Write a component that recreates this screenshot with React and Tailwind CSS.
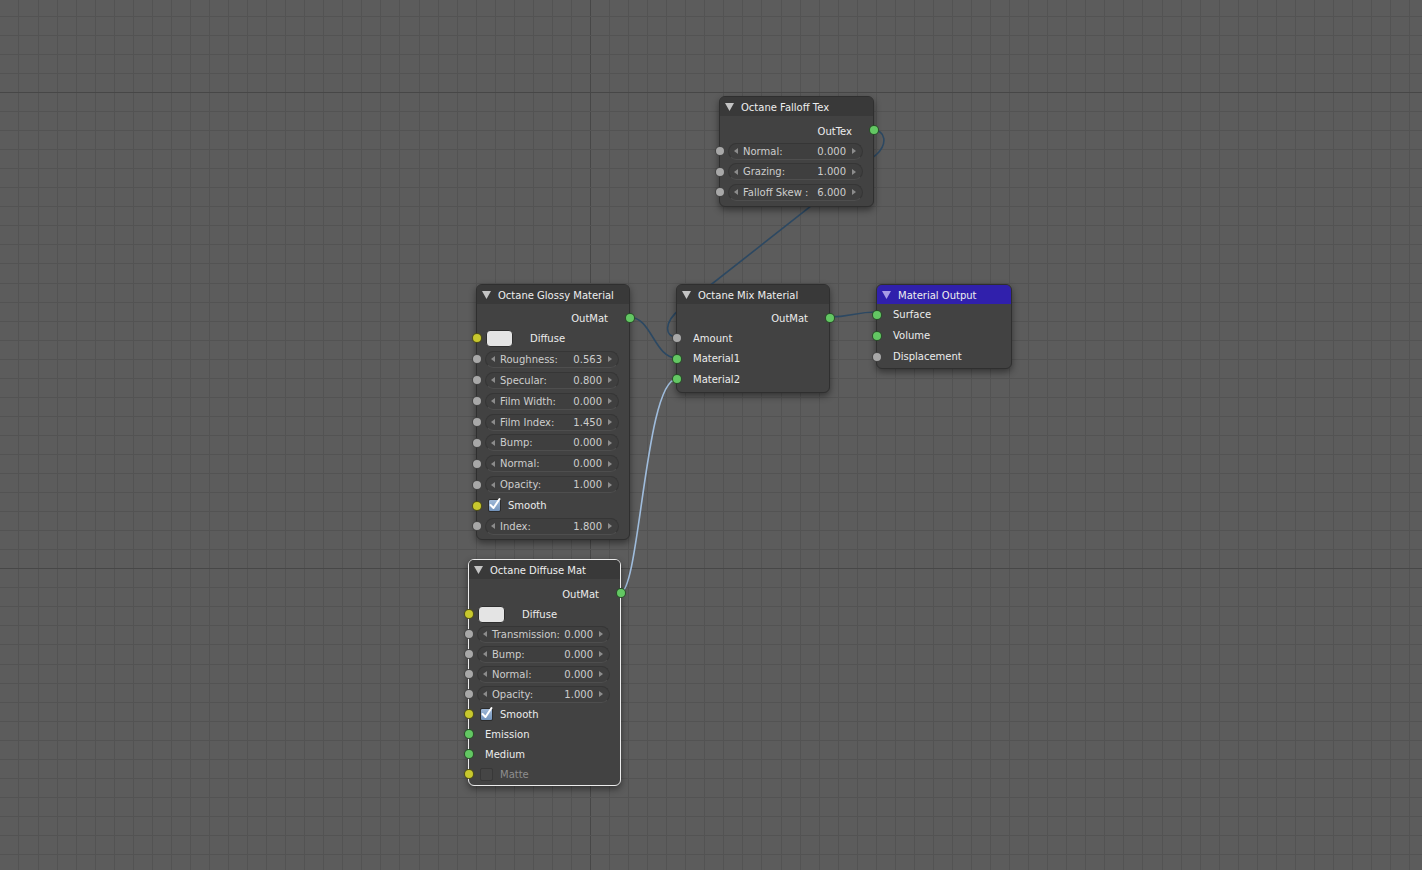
import clsx from "clsx";

const GRID = 19.05;

const SOCKET = {
  gray: "bg-[#a8a8a8]",
  yellow: "bg-[#c8c82e]",
  green: "bg-[#63c763]",
};

const nodes = [
  {
    title: "Octane Falloff Tex",
    x: 719,
    y: 96,
    w: 155,
    out: "OutTex",
    outH: "h-[20px]",
    rowH: "h-[20.5px]",
    pb: "pb-[3px]",
    rows: [
      { type: "field", label: "Normal:", value: "0.000", socket: "gray" },
      { type: "field", label: "Grazing:", value: "1.000", socket: "gray" },
      { type: "field", label: "Falloff Skew :", value: "6.000", socket: "gray" },
    ],
  },
  {
    title: "Octane Glossy Material",
    x: 476,
    y: 284,
    w: 154,
    out: "OutMat",
    outH: "h-[19px]",
    rowH: "h-[20.9px]",
    pb: "pb-[2px]",
    rows: [
      { type: "color", label: "Diffuse", socket: "yellow" },
      { type: "field", label: "Roughness:", value: "0.563", socket: "gray" },
      { type: "field", label: "Specular:", value: "0.800", socket: "gray" },
      { type: "field", label: "Film Width:", value: "0.000", socket: "gray" },
      { type: "field", label: "Film Index:", value: "1.450", socket: "gray" },
      { type: "field", label: "Bump:", value: "0.000", socket: "gray" },
      { type: "field", label: "Normal:", value: "0.000", socket: "gray" },
      { type: "field", label: "Opacity:", value: "1.000", socket: "gray" },
      { type: "check", label: "Smooth", checked: true, socket: "yellow" },
      { type: "field", label: "Index:", value: "1.800", socket: "gray" },
    ],
  },
  {
    title: "Octane Mix Material",
    x: 676,
    y: 284,
    w: 154,
    out: "OutMat",
    outH: "h-[19px]",
    rowH: "h-[20.5px]",
    pb: "pb-[2.5px]",
    rows: [
      { type: "text", label: "Amount", socket: "gray" },
      { type: "text", label: "Material1", socket: "green" },
      { type: "text", label: "Material2", socket: "green" },
    ],
  },
  {
    title: "Material Output",
    x: 876,
    y: 284,
    w: 136,
    output: true,
    rowH: "h-[21px]",
    pb: "pb-[1px]",
    rows: [
      { type: "text", label: "Surface", socket: "green" },
      { type: "text", label: "Volume", socket: "green" },
      { type: "text", label: "Displacement", socket: "gray" },
    ],
  },
  {
    title: "Octane Diffuse Mat",
    x: 468,
    y: 559,
    w: 153,
    selected: true,
    out: "OutMat",
    outH: "h-[20px]",
    rowH: "h-[20px]",
    pb: "pb-[1px]",
    rows: [
      { type: "color", label: "Diffuse", socket: "yellow" },
      { type: "field", label: "Transmission:", value: "0.000", socket: "gray" },
      { type: "field", label: "Bump:", value: "0.000", socket: "gray" },
      { type: "field", label: "Normal:", value: "0.000", socket: "gray" },
      { type: "field", label: "Opacity:", value: "1.000", socket: "gray" },
      { type: "check", label: "Smooth", checked: true, socket: "yellow" },
      { type: "text", label: "Emission", socket: "green" },
      { type: "text", label: "Medium", socket: "green" },
      { type: "check", label: "Matte", checked: false, disabled: true, socket: "yellow" },
    ],
  },
];

function Socket({ color, side }) {
  return (
    <span
      className={clsx(
        "absolute top-1/2 h-[10px] w-[10px] -translate-y-1/2 rounded-full border border-black/60",
        side === "left" ? "-left-[5.5px]" : "-right-[5.5px] -mt-[1px]",
        SOCKET[color]
      )}
    />
  );
}

function Arrow({ dir }) {
  return (
    <svg width="4" height="6" viewBox="0 0 4 6" className="shrink-0">
      {dir === "left" ? (
        <polygon points="4,0 4,6 0,3" fill="#8c8c8c" />
      ) : (
        <polygon points="0,0 0,6 4,3" fill="#8c8c8c" />
      )}
    </svg>
  );
}

function Checkbox({ checked, disabled }) {
  if (!checked) {
    return (
      <span
        className={clsx(
          "h-[13px] w-[13px] shrink-0 rounded-[2px] border border-[#343434] bg-[#474747]",
          disabled && "opacity-70"
        )}
      />
    );
  }
  return (
    <span className="relative h-[13px] w-[13px] shrink-0 rounded-[2px] border border-[#2c2c2c] bg-gradient-to-b from-[#9fb9d8] to-[#7293bb]">
      <svg width="13" height="14" viewBox="0 0 13 14" className="absolute -left-[1px] -top-[3px]">
        <path d="M2.5 8 L5.5 11 L11.5 2" stroke="#ffffff" strokeWidth="2" fill="none" strokeLinecap="round" strokeLinejoin="round" />
      </svg>
    </span>
  );
}

function Row({ row, rowH }) {
  return (
    <div className={clsx("relative flex items-center", rowH)}>
      <Socket color={row.socket} side="left" />
      {row.type === "field" && (
        <div className="ml-[8px] mr-[10px] flex h-[17px] flex-1 items-center rounded-full border border-[#363636] border-b-[#4e4e4e] bg-[#3f3f3f] pl-[5px] pr-[6px] text-[10px] text-[#cdcdcd]">
          <Arrow dir="left" />
          <span className="ml-[5px] flex-1 whitespace-nowrap">{row.label}</span>
          <span className="mr-[6px]">{row.value}</span>
          <Arrow dir="right" />
        </div>
      )}
      {row.type === "color" && (
        <>
          <span className="ml-[9px] h-[17px] w-[27px] shrink-0 rounded-[4px] border border-[#2e2e2e] bg-[#e4e4e4]" />
          <span className="ml-[17px] text-[10px] text-[#ececec]">{row.label}</span>
        </>
      )}
      {row.type === "check" && (
        <>
          <span className="ml-[11px] flex">
            <Checkbox checked={row.checked} disabled={row.disabled} />
          </span>
          <span
            className={clsx(
              "ml-[7px] text-[10px]",
              row.disabled ? "text-[#8e8e8e]" : "text-[#ececec]"
            )}
          >
            {row.label}
          </span>
        </>
      )}
      {row.type === "text" && (
        <span className="ml-[16px] text-[10px] text-[#ececec]">{row.label}</span>
      )}
    </div>
  );
}

function Node({ node }) {
  return (
    <div
      className={clsx(
        "absolute rounded-[6px] border bg-[#424242] shadow-[0_3px_7px_rgba(0,0,0,0.45)]",
        node.selected ? "border-[#ececec]" : "border-[#2f2f2f]",
        node.pb
      )}
      style={{ left: node.x, top: node.y, width: node.w }}
    >
      <div
        className={clsx(
          "flex h-[19px] items-center rounded-t-[5px] pl-[5px] pt-[1px]",
          node.output ? "bg-[#3020ac]" : "bg-[#393939]"
        )}
      >
        <svg width="9" height="8" viewBox="0 0 9 8" className="shrink-0">
          <polygon points="0,0 9,0 4.5,8" fill={node.output ? "#a89ce6" : "#c4c4c4"} />
        </svg>
        <span className="ml-[7px] whitespace-nowrap text-[10px] text-[#eeeeee]">{node.title}</span>
      </div>
      {node.out && (
        <div className={clsx("relative mt-[5px] flex items-center justify-end pr-[21px]", node.outH)}>
          <span className="text-[10px] text-[#ececec]">{node.out}</span>
          <Socket color="green" side="right" />
        </div>
      )}
      {node.rows.map((row) => (
        <Row key={row.label} row={row} rowH={node.rowH} />
      ))}
    </div>
  );
}

function Canvas() {
  const vx = [];
  for (let k = 0; k < 78; k++) {
    const x = Math.round(590 - GRID * 31 + GRID * k) + 0.5;
    vx.push({ x, major: k === 31 });
  }
  const hy = [];
  for (let k = 0; k < 48; k++) {
    const y = Math.round(92 - GRID * 5 + GRID * k) + 0.5;
    hy.push({ y, major: k === 5 || k === 30 });
  }
  return (
    <svg className="absolute inset-0" width="1422" height="870">
      {vx.map((l) => (
        <line key={"v" + l.x} x1={l.x} y1="0" x2={l.x} y2="870" stroke={l.major ? "#474747" : "#535353"} strokeWidth="1" />
      ))}
      {hy.map((l) => (
        <line key={"h" + l.y} x1="0" y1={l.y} x2="1422" y2={l.y} stroke={l.major ? "#474747" : "#535353"} strokeWidth="1" />
      ))}
      <g fill="none" strokeWidth="1.6" strokeLinecap="round">
        <path d="M872 130 C886 130 888 144 876 155 L680 309 C664 322 664 337 677 337" stroke="#2c4862" />
        <path d="M629 317 C652 317 654 358 677 358" stroke="#2c4862" />
        <path d="M829 317 C852 317 854 312 877 312" stroke="#2c4862" />
        <path d="M620 593 C640 593 645 379 677 379" stroke="#9fbcdc" />
      </g>
    </svg>
  );
}

export default function App() {
  return (
    <div className="relative h-[870px] w-[1422px] overflow-hidden bg-[#5c5c5c] font-['DejaVu_Sans',sans-serif]">
      <Canvas />
      {nodes.map((node) => (
        <Node key={node.title} node={node} />
      ))}
    </div>
  );
}
